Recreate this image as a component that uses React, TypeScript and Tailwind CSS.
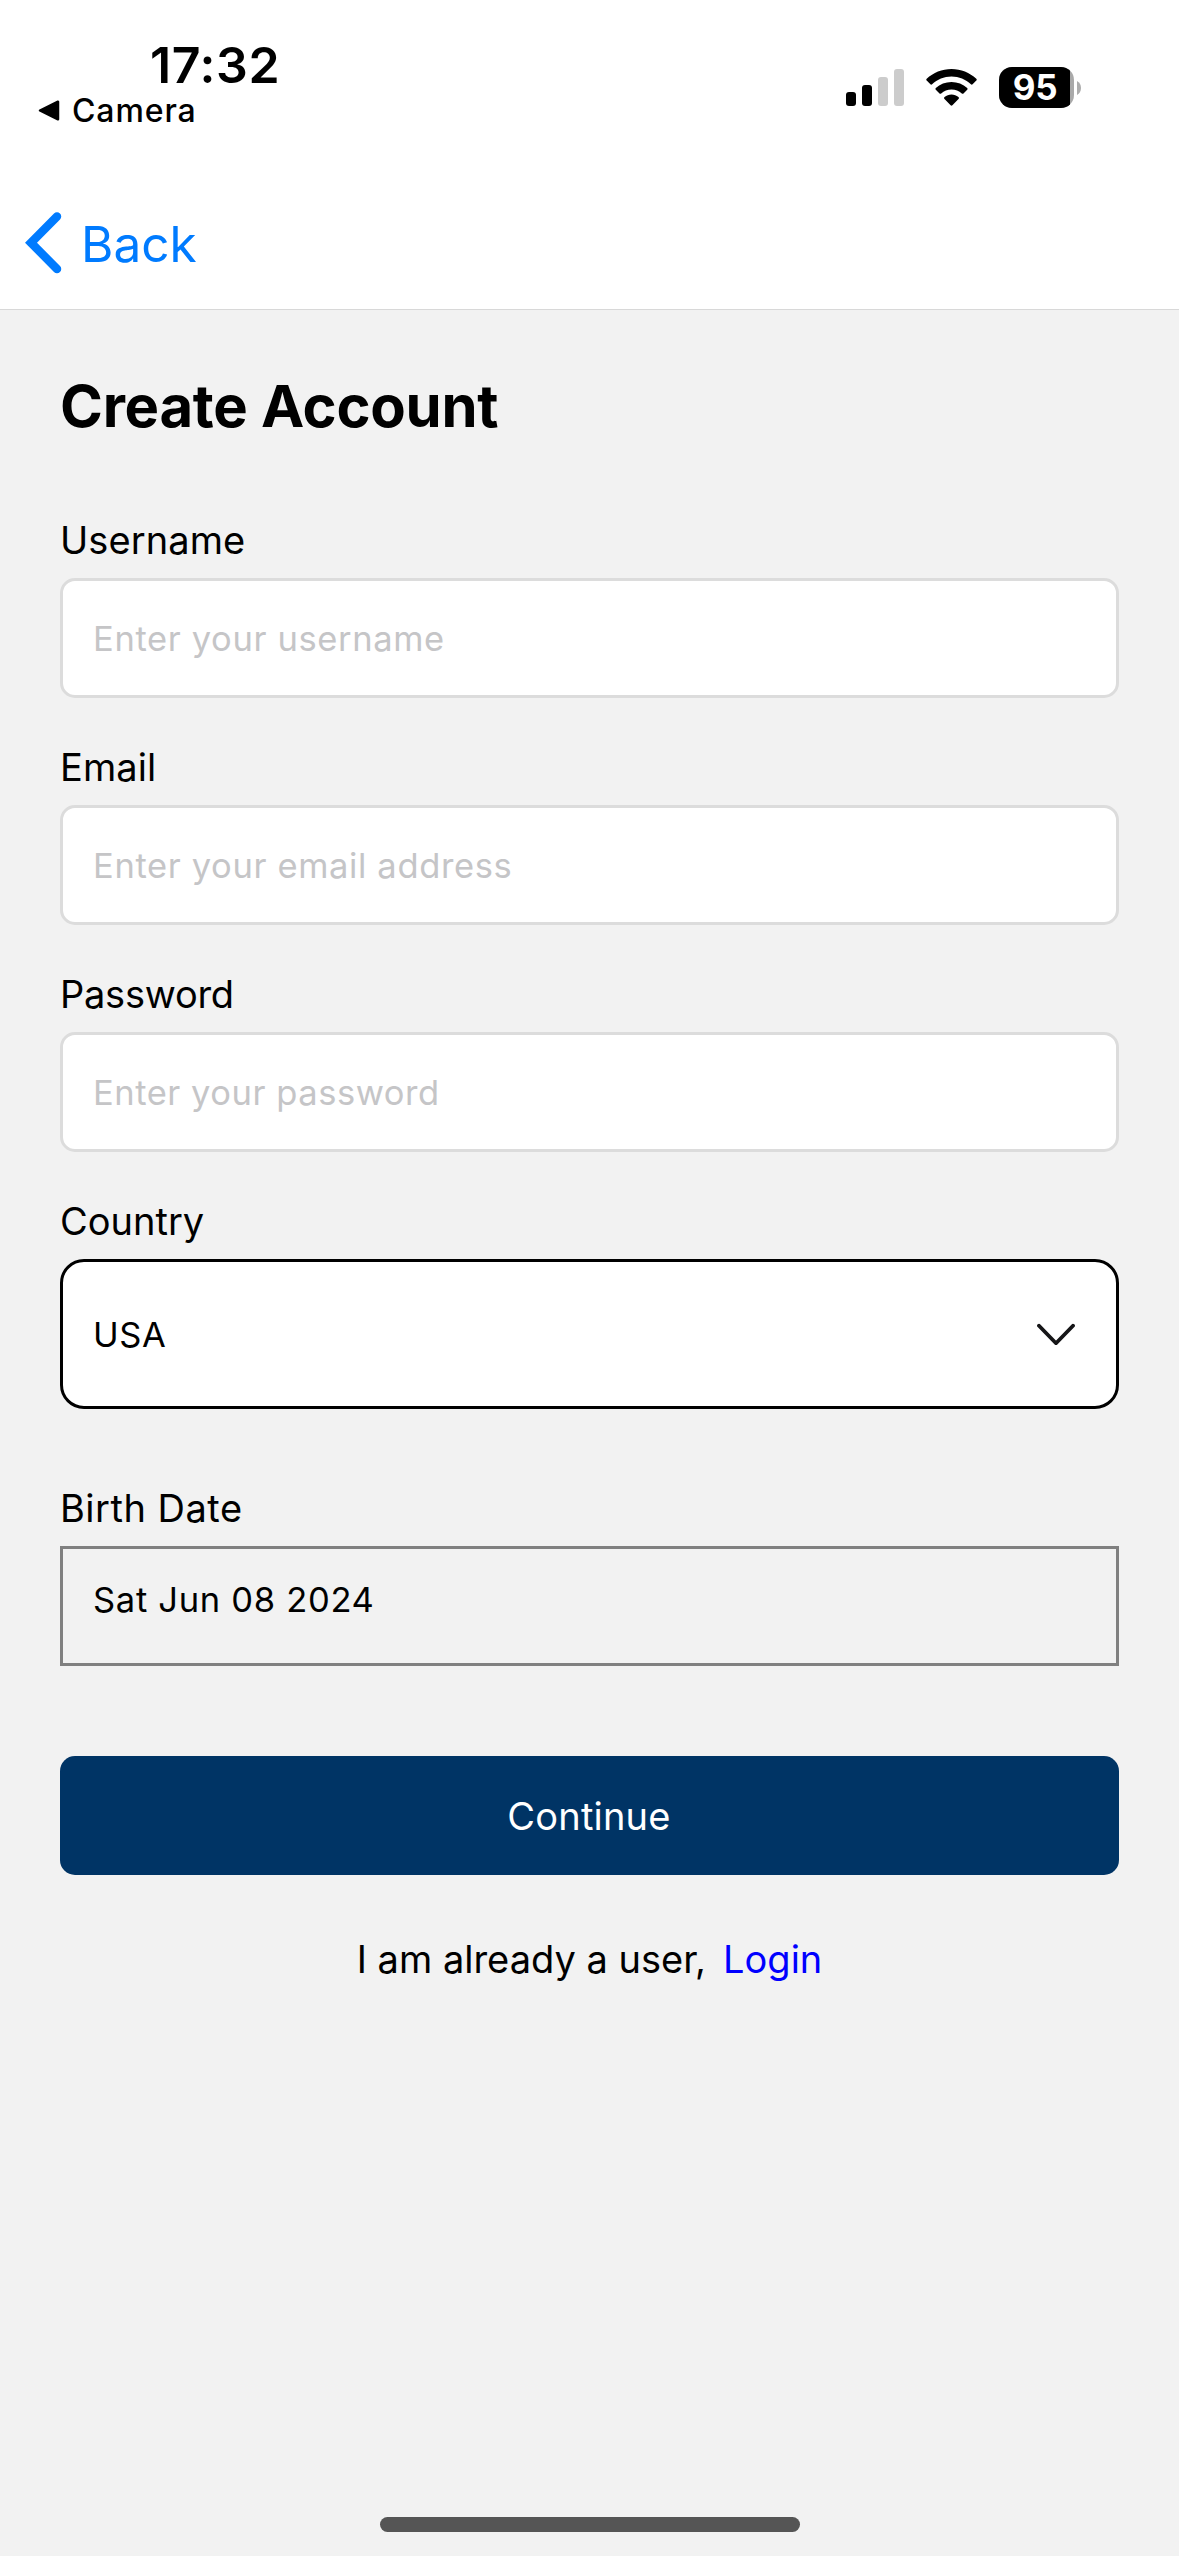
import React from "react";

function SignalIcon() {
  return (
    <svg width="58" height="37" viewBox="0 0 58 37">
      <rect x="0" y="23" width="10" height="14" rx="3" fill="#000" />
      <rect x="16" y="16" width="10" height="21" rx="3" fill="#000" />
      <rect x="32" y="8" width="10" height="29" rx="3" fill="#ccc" />
      <rect x="48" y="0" width="10" height="37" rx="3" fill="#ccc" />
    </svg>
  );
}

function WifiIcon() {
  return (
    <svg width="51" height="37" viewBox="0 0 51 37" fill="#000">
      <path d="M25.500 0C35 0 43.700 3.600 50.300 9.800Q51.200 10.700 50.300 11.600L46.600 15.300Q45.800 16.100 44.900 15.300C39.700 10.500 33 7.600 25.500 7.600S11.300 10.500 6.100 15.300Q5.200 16.100 4.400 15.300L.7 11.600Q-.2 10.700 .7 9.800C7.300 3.600 16 0 25.500 0Z" />
      <path d="M25.500 13C31.500 13 37 15.300 41.200 19Q42.100 19.900 41.200 20.800L37.500 24.400Q36.700 25.200 35.800 24.400C33 22 29.500 20.500 25.500 20.500S18 22 15.200 24.400Q14.300 25.200 13.500 24.400L9.800 20.800Q8.900 19.900 9.800 19C14 15.300 19.500 13 25.500 13Z" />
      <path d="M25.500 25.600C28.100 25.600 30.500 26.500 32.400 28Q33.500 28.900 32.500 29.900L26.400 36.300Q25.500 37.200 24.600 36.300L18.500 29.900Q17.500 28.900 18.600 28C20.500 26.500 22.900 25.600 25.500 25.600Z" />
    </svg>
  );
}

function Battery() {
  return (
    <div className="flex items-center gap-[3px]">
      <div className="h-[41px] w-[75px] overflow-hidden rounded-[13px] bg-[#a9a9a9]">
        <div className="flex h-full w-[71px] items-center justify-center bg-black pl-px text-[35px] leading-[41px] font-bold tracking-[-0.2px] text-white">
          95
        </div>
      </div>
      <svg width="4" height="14" viewBox="0 0 4 14">
        <path d="M0 0C2.500 1.200 4 3.800 4 7S2.500 12.800 0 14Z" fill="#adadad" />
      </svg>
    </div>
  );
}

function StatusBar() {
  return (
    <div className="flex h-[180px] items-start">
      <div className="flex flex-col pt-[38px]">
        <div className="pl-[150px] text-[50px] leading-[54px] font-semibold tracking-[0.6px]">
          17:32
        </div>
        <div className="flex items-center pl-[38px] text-[32px] leading-[38px] font-medium tracking-[0.9px]">
          <svg className="mr-[12px]" width="22" height="22" viewBox="0 0 22 22">
            <path
              d="M2 10.500L20 1.700V19.300Z"
              fill="#000"
              stroke="#000"
              strokeWidth="2.500"
              strokeLinejoin="round"
            />
          </svg>
          Camera
        </div>
      </div>
      <div className="mt-[67px] mr-[98px] ml-auto flex items-center gap-[22px]">
        <div className="flex items-center gap-[22px]">
          <SignalIcon />
          <WifiIcon />
        </div>
        <Battery />
      </div>
    </div>
  );
}

function Field({ label, placeholder }: { label: string; placeholder: string }) {
  return (
    <label className="mb-[46px] block">
      <span
        className={
          label === "Password"
            ? "block text-[38px] leading-[46px] tracking-[-0.25px]"
            : "block text-[38px] leading-[46px] tracking-[0.08px]"
        }
      >
        {label}
      </span>
      <input
        className={
          label === "Password"
            ? "mt-[15px] block h-[120px] w-full rounded-[15px] border-[3px] border-[#dcdcdc] bg-white px-[30px] text-[34.5px] tracking-[0.54px] outline-none placeholder:text-[#c5c5c7]"
            : "mt-[15px] block h-[120px] w-full rounded-[15px] border-[3px] border-[#dcdcdc] bg-white px-[30px] text-[34.5px] tracking-[0.64px] outline-none placeholder:text-[#c5c5c7]"
        }
        placeholder={placeholder}
      />
    </label>
  );
}

export default function App() {
  return (
    <div className="flex h-[2556px] w-[1179px] flex-col bg-[#f2f2f2] font-['Inter',sans-serif] text-black">
      <header className="h-[310px] border-b border-[#d8d8d8] bg-white">
        <StatusBar />
        <div className="flex items-start pt-[32px] pl-[25px] text-[#007bff]">
          <svg width="37" height="62" viewBox="0 0 37 62" fill="none">
            <path
              d="M32 4.500L6 30.700L32 57"
              stroke="currentColor"
              strokeWidth="8.500"
              strokeLinecap="round"
            />
          </svg>
          <span className="mt-[2px] ml-[19px] text-[49.5px] leading-[60px]">Back</span>
        </div>
      </header>

      <main className="flex flex-1 flex-col px-[60px] pt-[61px]">
        <h1 className="mb-[76px] text-[58px] leading-[70px] font-bold tracking-[-0.28px]">
          Create Account
        </h1>

        <Field label="Username" placeholder="Enter your username" />
        <Field label="Email" placeholder="Enter your email address" />
        <Field label="Password" placeholder="Enter your password" />

        <div className="text-[38px] leading-[46px]">Country</div>
        <div className="mt-[15px] flex h-[150px] items-center justify-between rounded-[24px] border-[3px] border-black bg-white pr-[40px] pl-[30px] text-[34.5px] tracking-[0.6px]">
          <span className="pt-px">USA</span>
          <svg width="40" height="22" viewBox="0 0 40 22" fill="none">
            <path
              d="M3 2.700L20 20.200L37 2.700"
              stroke="#161618"
              strokeWidth="3.800"
              strokeLinecap="round"
              strokeLinejoin="round"
            />
          </svg>
        </div>

        <div className="mt-[76px] text-[38px] leading-[46px] tracking-[0.5px]">Birth Date</div>
        <div className="mt-[15px] h-[120px] border-[3px] border-[#808080] px-[30px] pt-[30px] text-[34.5px] leading-[42px] tracking-[0.7px]">
          Sat Jun 08 2024
        </div>

        <button className="mt-[90px] flex h-[119px] items-center justify-center rounded-[15px] bg-[#003465] pr-[1px] text-[38px] leading-[46px] tracking-[0.2px] text-white">
          Continue
        </button>

        <div className="mt-[61px] flex justify-center gap-[17px] text-[38px] leading-[46px]">
          <span>I am already a user,</span>
          <a className="text-[#0000ff]">Login</a>
        </div>
      </main>

      <div className="mx-auto mb-[24px] h-[15px] w-[420px] rounded-full bg-[#555]" />
    </div>
  );
}
